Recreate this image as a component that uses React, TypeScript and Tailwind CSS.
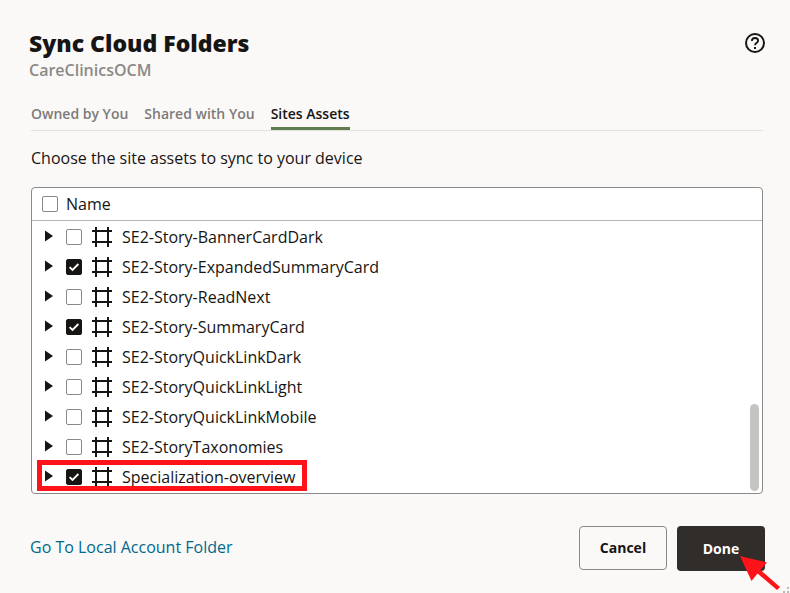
import { useState } from "react";

type Asset = { name: string; checked: boolean; highlighted?: boolean };

const initialAssets: Asset[] = [
  { name: "SE2-Story-BannerCardDark", checked: false },
  { name: "SE2-Story-ExpandedSummaryCard", checked: true },
  { name: "SE2-Story-ReadNext", checked: false },
  { name: "SE2-Story-SummaryCard", checked: true },
  { name: "SE2-StoryQuickLinkDark", checked: false },
  { name: "SE2-StoryQuickLinkLight", checked: false },
  { name: "SE2-StoryQuickLinkMobile", checked: false },
  { name: "SE2-StoryTaxonomies", checked: false },
  { name: "Specialization-overview", checked: true, highlighted: true },
];

const tabs = ["Owned by You", "Shared with You", "Sites Assets"];

function HelpIcon() {
  return (
    <svg viewBox="0 0 20 20" className="size-5" fill="none" stroke="#161513" aria-hidden="true">
      <circle cx="10" cy="10" r="9" strokeWidth="2" />
      <path d="M6.9 8.1C6.9 6.2 8.2 5 10 5s3.1 1.1 3.1 2.7c0 2.1-3.1 2.2-3.1 4.6" strokeWidth="1.8" />
      <path d="M10 14v2" strokeWidth="2" />
    </svg>
  );
}

function AssetIcon() {
  return (
    <svg viewBox="0 0 20 20" className="size-5" fill="none" stroke="#161513" strokeWidth="2" aria-hidden="true">
      <path d="M4 0v20M16 0v20M0 4h20M0 15h20" shapeRendering="crispEdges" />
    </svg>
  );
}

function Checkbox({ id, checked, onChange }: { id: string; checked: boolean; onChange: () => void }) {
  return (
    <span className="grid size-4 shrink-0">
      <input
        id={id}
        type="checkbox"
        checked={checked}
        onChange={onChange}
        className="col-start-1 row-start-1 size-4 appearance-none rounded-xs border border-[#8b8987] bg-white checked:border-[#161513] checked:bg-[#161513]"
      />
      {checked && (
        <svg viewBox="0 0 16 16" className="pointer-events-none col-start-1 row-start-1 size-4" fill="none" stroke="#fff" strokeWidth="1.8" aria-hidden="true">
          <path d="M3.6 8.2l2.9 2.8 5.9-6" />
        </svg>
      )}
    </span>
  );
}

export default function App() {
  const [assets, setAssets] = useState(initialAssets);
  const [activeTab, setActiveTab] = useState("Sites Assets");

  const toggle = (name: string) =>
    setAssets(assets.map((a) => (a.name === name ? { ...a, checked: !a.checked } : a)));
  const allChecked = assets.every((a) => a.checked);

  return (
    <main className="relative min-h-screen overflow-hidden bg-[#fbf9f8] pt-7 pr-[25px] pb-[22px] pl-[29px] font-['Open_Sans','Noto_Sans',sans-serif] text-base text-[#161513]">
      <header className="flex items-start justify-between">
        <div>
          <h1 className="mb-0.5 text-[23px] leading-[30px] font-extrabold">Sync Cloud Folders</h1>
          <p className="leading-5 font-semibold text-[#8b8987]">CareClinicsOCM</p>
        </div>
        <button type="button" aria-label="Help" className="mt-[5px]">
          <HelpIcon />
        </button>
      </header>

      <div className="mr-0.5 ml-0.5">
        <div role="tablist" className="mt-[18px] flex gap-4 border-b border-[#e4e1dd] text-sm font-semibold">
          {tabs.map((tab) => (
            <button
              key={tab}
              type="button"
              role="tab"
              aria-selected={tab === activeTab}
              onClick={() => setActiveTab(tab)}
              className={
                tab === activeTab
                  ? "h-8 border-b-3 border-[#5f7d4f] pt-0.5"
                  : "h-8 border-b-3 border-transparent pt-0.5 text-[#7d7b79]"
              }
            >
              {tab}
            </button>
          ))}
        </div>

        <p className="mt-[15px] mb-[17px] leading-6">Choose the site assets to sync to your device</p>

        <section className="relative rounded border border-[#8b8987] bg-white">
          <div className="flex h-[33px] items-center gap-2 border-b border-[#b9b7b5] pl-2.5">
            <Checkbox
              id="all"
              checked={allChecked}
              onChange={() => setAssets(assets.map((a) => ({ ...a, checked: !allChecked })))}
            />
            <label htmlFor="all">Name</label>
          </div>
          <ul className="pt-px pb-px">
            {assets.map((asset) => (
              <li key={asset.name} className="relative flex h-[30px] items-center pl-3">
                <button type="button" aria-label={`Expand ${asset.name}`} className="mr-3 pb-0.5">
                  <svg viewBox="0 0 10 12" className="h-3 w-2.5" aria-hidden="true">
                    <path d="M1 0.5L9 6 1 11.5z" fill="#161513" />
                  </svg>
                </button>
                <Checkbox id={asset.name} checked={asset.checked} onChange={() => toggle(asset.name)} />
                <span className="mr-2.5 ml-2.5">
                  <AssetIcon />
                </span>
                <label htmlFor={asset.name}>{asset.name}</label>
                {asset.highlighted && (
                  <span className="pointer-events-none absolute -top-0.5 left-[5px] h-[31px] w-[270px] border-5 border-[#ff1318]" />
                )}
              </li>
            ))}
          </ul>
          <div className="absolute right-[3px] bottom-0.5 h-[87px] w-[9px] rounded-full bg-[#c4c4c2]" />
        </section>
      </div>

      <footer className="mt-8 flex items-start justify-between">
        <a href="#local" className="mt-[9px] ml-px text-[#00688c]">
          Go To Local Account Folder
        </a>
        <div className="flex gap-2.5 text-sm font-bold">
          <button type="button" className="h-11 w-[88px] rounded border border-[#8b8987]">
            Cancel
          </button>
          <button type="button" className="relative h-[45px] w-[88px] rounded bg-[#312d2a] text-white">
            Done
            <svg viewBox="0 0 42 36" className="pointer-events-none absolute top-[29px] left-[62px] h-9 w-[42px]" aria-hidden="true">
              <path d="M1 1L28 7.5 21.5 15 41 32 38 35 18.5 18.5 12.5 26z" fill="#ff1318" />
            </svg>
          </button>
        </div>
      </footer>

      <svg viewBox="0 0 6 6" className="absolute right-px bottom-0 size-1.5" fill="#b9b7b5" aria-hidden="true">
        <path d="M0 4h2v2H0zM4 4h2v2H4zM4 0h2v2H4z" />
      </svg>
    </main>
  );
}
